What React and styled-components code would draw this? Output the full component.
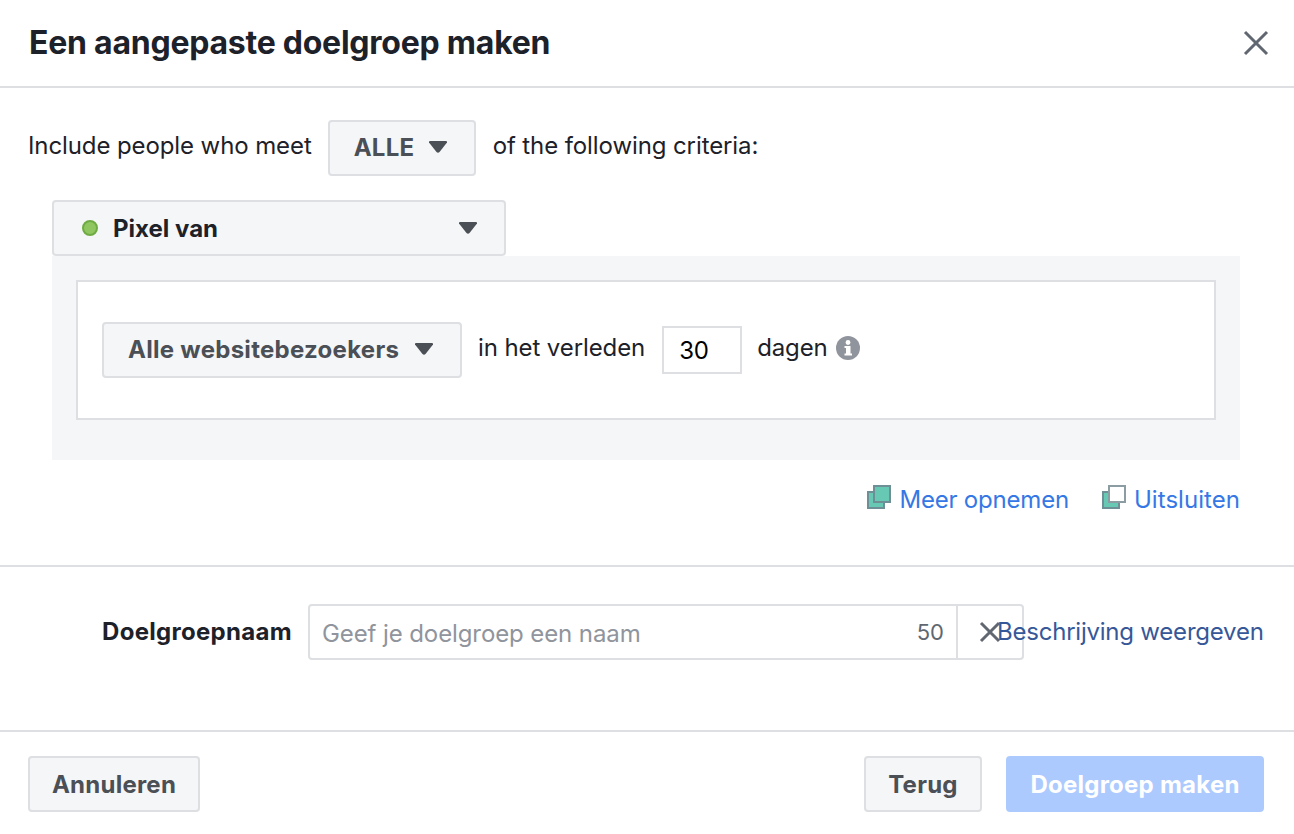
import React from 'react'
import styled, { createGlobalStyle } from 'styled-components'

const GlobalStyle = createGlobalStyle`
  html, body {
    margin: 0;
    padding: 0;
    background: #fff;
    font-family: Inter, Roboto, "Liberation Sans", sans-serif;
    color: #1d2129;
  }
`

const Dialog = styled.div`
  width: 1294px;
  height: 834px;
  display: flex;
  flex-direction: column;
  overflow: hidden;
`

const Header = styled.div`
  height: 86px;
  flex: none;
  box-sizing: content-box;
  border-bottom: 2px solid #dddfe2;
  display: flex;
  align-items: center;
  justify-content: space-between;
  padding: 0 24px 0 29px;
`

const Title = styled.h1`
  margin: 0;
  font-size: 32px;
  font-weight: 700;
  line-height: 40px;
  letter-spacing: -0.24px;
  color: #1d2129;
`

const CloseIcon = styled.svg`
  width: 28px;
  height: 28px;
  display: block;
`

const Criteria = styled.div`
  height: 479px;
  flex: none;
  box-sizing: border-box;
  border-bottom: 2px solid #dddfe2;
  padding: 32px 54px 0 52px;
  display: flex;
  flex-direction: column;
`

const IncludeRow = styled.div`
  display: flex;
  align-items: center;
  margin-left: -24px;
  height: 56px;
  margin-bottom: 24px;
`

const Label = styled.span`
  font-size: 24px;
  line-height: 30px;
  letter-spacing: -0.1px;
  color: #1d2129;
  white-space: nowrap;
  margin: ${p => p.$margin || '-4px 0 0'};
`

const Select = styled.div`
  box-sizing: border-box;
  width: ${p => p.$width};
  height: 56px;
  flex: none;
  background: #f5f6f7;
  border: 2px solid #dddfe2;
  border-radius: 4px;
  display: flex;
  align-items: center;
  justify-content: space-between;
  padding: ${p => p.$padding};
  font-size: 24px;
  font-weight: 700;
  letter-spacing: ${p => p.$spacing || '0'};
  color: #4b4f56;
  white-space: nowrap;
`

const SourceName = styled.span`
  display: flex;
  align-items: center;
  gap: 15px;
  color: #1d2129;
`

const Dot = styled.span`
  width: 12px;
  height: 12px;
  border-radius: 50%;
  background: #8fc65f;
  border: 2px solid #6fab44;
  display: block;
`

const Caret = styled.svg`
  width: 20px;
  height: 14px;
  display: block;
  flex: none;
`

const Panel = styled.div`
  background: #f5f6f7;
  height: 204px;
  box-sizing: border-box;
  padding: 24px;
`

const RuleBox = styled.div`
  box-sizing: border-box;
  height: 140px;
  background: #fff;
  border: 2px solid #dddfe2;
  display: flex;
  align-items: center;
  padding: 0 24px;
`

const DaysInput = styled.div`
  box-sizing: border-box;
  width: 80px;
  height: 48px;
  border: 2px solid #dddfe2;
  padding-left: 15px;
  display: flex;
  align-items: center;
  font-size: 24px;
  letter-spacing: -0.2px;
  color: #000;
  margin: 0 15px 0 17px;
  flex: none;
`

const InfoIcon = styled.svg`
  width: 24px;
  height: 24px;
  display: block;
  margin: -4px 0 0 8px;
`

const Links = styled.div`
  display: flex;
  justify-content: flex-end;
  gap: 33px;
  margin-top: 24px;
`

const LinkItem = styled.a`
  display: flex;
  align-items: center;
  gap: 8px;
  font-size: 24px;
  line-height: 32px;
  letter-spacing: ${p => p.$spacing};
  color: #3578e5;
  white-space: nowrap;
`

const LayerIcon = styled.svg`
  width: 24px;
  height: 24px;
  display: block;
  margin-top: -6px;
`

const NameSection = styled.div`
  height: 165px;
  flex: none;
  box-sizing: border-box;
  border-bottom: 2px solid #dddfe2;
  padding: 37px 0 0 102px;
  display: flex;
  align-items: flex-start;
`

const NameLabel = styled.label`
  font-size: 24px;
  font-weight: 700;
  line-height: 56px;
  letter-spacing: 0.3px;
  color: #1d2129;
  margin-right: 16px;
  white-space: nowrap;
`

const NameField = styled.div`
  box-sizing: border-box;
  width: 716px;
  height: 56px;
  border: 2px solid #dddfe2;
  border-radius: 4px;
  display: flex;
  align-items: center;
  flex: none;
`

const Placeholder = styled.span`
  flex: 1;
  font-size: 24px;
  letter-spacing: -0.1px;
  color: #90949c;
  padding: 2px 0 0 12px;
  white-space: nowrap;
`

const Counter = styled.span`
  font-size: 22px;
  color: #606770;
  margin-right: 12px;
`

const ClearCell = styled.div`
  width: 66px;
  height: 100%;
  border-left: 2px solid #dddfe2;
  display: flex;
  align-items: center;
  padding-left: 20px;
  box-sizing: border-box;
  flex: none;
`

const ClearIcon = styled.svg`
  width: 24px;
  height: 24px;
  display: block;
`

const DescriptionLink = styled.a`
  font-size: 24px;
  line-height: 56px;
  letter-spacing: -0.22px;
  color: #365899;
  margin-left: -27px;
  white-space: nowrap;
  position: relative;
`

const Footer = styled.div`
  flex: 1;
  display: flex;
  align-items: flex-start;
  justify-content: space-between;
  padding: 24px 30px 0 28px;
`

const FooterRight = styled.div`
  display: flex;
  gap: 24px;
`

const Button = styled.button`
  box-sizing: border-box;
  width: ${p => p.$width};
  height: 56px;
  padding: 0;
  border-radius: 4px;
  border: 2px solid ${p => (p.$primary ? '#adcafe' : '#dddfe2')};
  background: ${p => (p.$primary ? '#adcafe' : '#f5f6f7')};
  color: ${p => (p.$primary ? '#fff' : '#4b4f56')};
  font-family: inherit;
  font-size: 24px;
  font-weight: 700;
  letter-spacing: 0.25px;
`

const CaretDown = () => (
  <Caret viewBox="0 0 20 14">
    <path d="M1 2.5 Q0.5 1 2 1 H18 Q19.5 1 19 2.5 L11.5 12 Q10 13.5 8.5 12 Z" fill="#4b4f56" />
  </Caret>
)

const Layers = ({ front }) => (
  <LayerIcon viewBox="0 0 24 24">
    <rect x="1" y="7" width="16" height="16" fill="#67c8b3" stroke="#6f8f96" strokeWidth="2" />
    <rect x="7" y="1" width="16" height="16" fill={front} stroke={front === '#fff' ? '#8c9ca3' : '#6f8f96'} strokeWidth="2" />
  </LayerIcon>
)

export default function App() {
  return (
    <Dialog>
      <GlobalStyle />
      <Header>
        <Title>Een aangepaste doelgroep maken</Title>
        <CloseIcon viewBox="0 0 28 28">
          <path d="M3 3 L25 25 M25 3 L3 25" stroke="#606770" strokeWidth="3" />
        </CloseIcon>
      </Header>
      <Criteria>
        <IncludeRow>
          <Label $margin="-4px 16px 0 0">Include people who meet</Label>
          <Select $width="148px" $padding="0 26px 2px 24px" $spacing="0.25px">
            ALLE
            <CaretDown />
          </Select>
          <Label $margin="-4px 0 0 17px">of the following criteria:</Label>
        </IncludeRow>
        <Select $width="454px" $padding="0 26px 0 28px">
          <SourceName>
            <Dot />
            Pixel van
          </SourceName>
          <CaretDown />
        </Select>
        <Panel>
          <RuleBox>
            <Select $width="360px" $padding="0 26px 2px 24px" $spacing="0.28px">
              Alle websitebezoekers
              <CaretDown />
            </Select>
            <Label $margin="-4px 0 0 16px">in het verleden</Label>
            <DaysInput>30</DaysInput>
            <Label>dagen</Label>
            <InfoIcon viewBox="0 0 24 24">
              <circle cx="12" cy="12" r="12" fill="#90949c" />
              <rect x="10" y="10" width="4.5" height="9" fill="#fff" />
              <rect x="8.5" y="10" width="3" height="2" fill="#fff" />
              <rect x="8.5" y="17.5" width="7.5" height="2" fill="#fff" />
              <circle cx="12" cy="6.5" r="2.4" fill="#fff" />
            </InfoIcon>
          </RuleBox>
        </Panel>
        <Links>
          <LinkItem $spacing="-0.2px">
            <Layers front="#67c8b3" />
            Meer opnemen
          </LinkItem>
          <LinkItem $spacing="0.05px">
            <Layers front="#fff" />
            Uitsluiten
          </LinkItem>
        </Links>
      </Criteria>
      <NameSection>
        <NameLabel>Doelgroepnaam</NameLabel>
        <NameField>
          <Placeholder>Geef je doelgroep een naam</Placeholder>
          <Counter>50</Counter>
          <ClearCell>
            <ClearIcon viewBox="0 0 24 24">
              <path d="M3 3 L21 21 M21 3 L3 21" stroke="#606770" strokeWidth="3" />
            </ClearIcon>
          </ClearCell>
        </NameField>
        <DescriptionLink>Beschrijving weergeven</DescriptionLink>
      </NameSection>
      <Footer>
        <Button $width="172px">Annuleren</Button>
        <FooterRight>
          <Button $width="118px">Terug</Button>
          <Button $width="258px" $primary>Doelgroep maken</Button>
        </FooterRight>
      </Footer>
    </Dialog>
  )
}
